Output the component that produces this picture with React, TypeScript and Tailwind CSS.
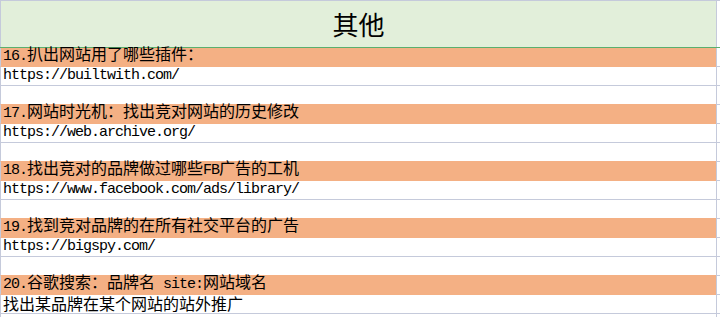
import React from "react";

type Row = { text: string; kind: "title" | "link" | "blank" };

const rows: Row[] = [
  { text: "16.扒出网站用了哪些插件：", kind: "title" },
  { text: "https://builtwith.com/", kind: "link" },
  { text: "", kind: "blank" },
  { text: "17.网站时光机：找出竞对网站的历史修改", kind: "title" },
  { text: "https://web.archive.org/", kind: "link" },
  { text: "", kind: "blank" },
  { text: "18.找出竞对的品牌做过哪些FB广告的工机", kind: "title" },
  { text: "https://www.facebook.com/ads/library/", kind: "link" },
  { text: "", kind: "blank" },
  { text: "19.找到竞对品牌的在所有社交平台的广告", kind: "title" },
  { text: "https://bigspy.com/", kind: "link" },
  { text: "", kind: "blank" },
  { text: "20.谷歌搜索：品牌名 site:网站域名", kind: "title" },
  { text: "找出某品牌在某个网站的站外推广", kind: "link" },
  { text: "", kind: "blank" },
];

// latin runs get a narrow mono font (half-width like SimSun), the rest CJK
function Mixed({ text }: { text: string }) {
  const parts = text.match(/[\x00-\x7F]+|[^\x00-\x7F]+/g) || [];
  return (
    <span className="leading-[18px]">
      {parts.map((p, i) =>
        /^[\x00-\x7F]+$/.test(p) ? (
          <span
            key={i}
            className="whitespace-pre font-['Liberation_Mono',monospace] text-[15px] leading-[18px] tracking-[-1px]"
          >
            {p}
          </span>
        ) : (
          <span key={i} className="font-['Noto_Sans_CJK_SC',sans-serif] text-[16px] leading-[18px]">
            {p}
          </span>
        )
      )}
    </span>
  );
}

export default function App() {
  return (
    <div className="w-[720px] h-[317px] overflow-hidden bg-white text-black">
      {/* header */}
      <div className="flex h-[48px] border-t border-[#c5cadb] border-b border-b-[#5baf6e]">
        <div className="w-[716px] border-l border-[#c5cadb] bg-[#e2efda] flex items-center justify-center">
          <span className="font-['Noto_Sans_CJK_SC',sans-serif] text-[26px] leading-none">
            其他
          </span>
        </div>
        <div className="flex-1 border-l border-[#c5cadb]" />
      </div>

      {rows.map((r, i) => {
        const nextTitle = rows[i + 1]?.kind === "title";
        const orange = r.kind === "title";
        return (
          <div key={i} className="flex h-[19px]">
            <div
              className={
                "w-[716px] border-l border-l-[#c5cadb] border-b flex items-end pl-[2px] leading-[18px] whitespace-nowrap " +
                (orange ? "bg-[#f4b084] " : "") +
                (orange || nextTitle ? "border-b-[#f4b084]" : "border-b-[#c5cadb]")
              }
            >
              {r.text && <Mixed text={r.text} />}
            </div>
            <div className="flex-1 border-l border-b border-[#c5cadb]" />
          </div>
        );
      })}
    </div>
  );
}
